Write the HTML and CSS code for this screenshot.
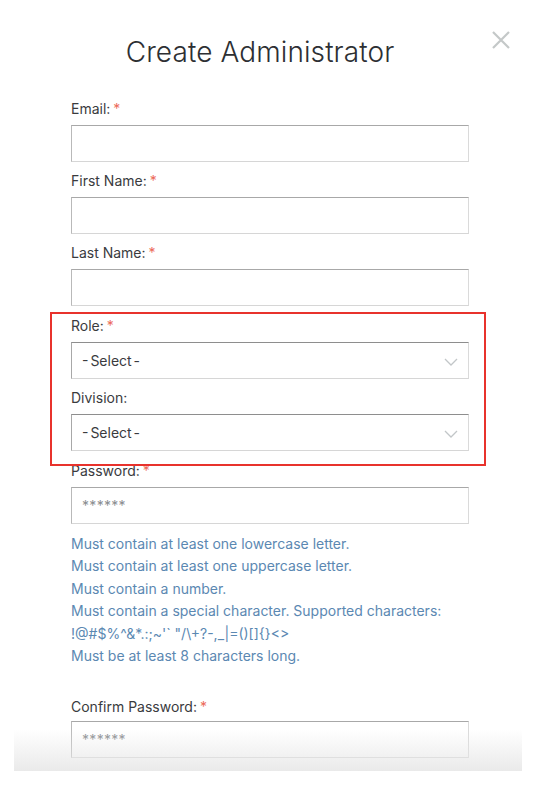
FILE: index.html
```html
<!DOCTYPE html>
<html>
<head>
<meta charset="utf-8">
<link rel="stylesheet" href="styles.css">
</head>
<body>
<div class="modal">
  <header class="modal-head">
    <h1 class="title">Create Administrator</h1>
    <button class="close" aria-label="Close">
      <svg width="18" height="18" viewBox="0 0 18 18"><path d="M1 1L17 17M17 1L1 17" stroke="#c4c8c8" stroke-width="2.2" fill="none"/></svg>
    </button>
  </header>
  <form class="form">
    <div class="field">
      <label class="label">Email:<span class="req">*</span></label>
      <input class="input" type="text">
    </div>
    <div class="field">
      <label class="label">First Name:<span class="req">*</span></label>
      <input class="input" type="text">
    </div>
    <div class="field">
      <label class="label">Last Name:<span class="req">*</span></label>
      <input class="input" type="text">
    </div>
    <div class="group">
      <div class="field">
        <label class="label">Role:<span class="req">*</span></label>
        <div class="select"><span class="sel-text">- Select -</span>
          <svg class="chev" width="14" height="8" viewBox="0 0 14 8"><path d="M1 1L7 7L13 1" stroke="#c2c6c8" stroke-width="1.3" fill="none"/></svg>
        </div>
      </div>
      <div class="field">
        <label class="label">Division:</label>
        <div class="select"><span class="sel-text">- Select -</span>
          <svg class="chev" width="14" height="8" viewBox="0 0 14 8"><path d="M1 1L7 7L13 1" stroke="#c2c6c8" stroke-width="1.3" fill="none"/></svg>
        </div>
      </div>
    </div>
    <div class="field pwfield">
      <label class="label">Password:<span class="req">*</span></label>
      <div class="input pw">******</div>
      <ul class="rules">
        <li>Must contain at least one lowercase letter.</li>
        <li>Must contain at least one uppercase letter.</li>
        <li>Must contain a number.</li>
        <li>Must contain a special character. Supported characters: !@#$%^&amp;*.:;~'` "/\+?-,_|=()[]{}&lt;&gt;</li>
        <li>Must be at least 8 characters long.</li>
      </ul>
    </div>
    <div class="field confirm">
      <label class="label">Confirm Password:<span class="req">*</span></label>
      <div class="input pw">******</div>
    </div>
  </form>
  <div class="fade"></div>
</div>
</body>
</html>
```
FILE: styles.css
```css
html, body {
  margin: 0;
  padding: 0;
  background: #fff;
  height: 786px;
  overflow: hidden;
}
body {
  font-family: Inter, "Noto Sans", sans-serif;
  color: #333;
}
.modal {
  position: relative;
  width: 508px;
  margin-left: 14px;
  height: 771px;
  overflow: hidden;
  background: #fff;
}
.modal-head {
  position: relative;
  padding-top: 34px;
  padding-right: 16px;
  height: 72px;
  box-sizing: border-box;
}
.title {
  margin: 0;
  text-align: center;
  font-weight: 300;
  font-size: 28px;
  line-height: 36px;
  color: #2d2f33;
  letter-spacing: 0.1px;
}
.close {
  position: absolute;
  top: 31px;
  right: 12px;
  padding: 0;
  border: 0;
  background: none;
  width: 18px;
  height: 18px;
}
.close svg { display: block; }
.form {
  margin-left: 57px;
  width: 398px;
  display: flex;
  flex-direction: column;
  gap: 10px;
  padding-top: 28px;
}
.group {
  position: relative;
  display: flex;
  flex-direction: column;
  gap: 10px;
  margin-top: 1px;
}
.group::before {
  content: "";
  position: absolute;
  left: -21px;
  right: -17px;
  top: -5px;
  bottom: -15px;
  border: 2px solid #e8322c;
  pointer-events: none;
}
.pwfield { margin-top: 1px; }
.field {
  display: flex;
  flex-direction: column;
}
.label {
  font-size: 14px;
  line-height: 18px;
  margin-bottom: 7px;
  color: #3a3b3e;
}
.confirm .label { margin-bottom: 5px; }
.req { color: #ec6a5a; margin-left: 3px; }
.input {
  box-sizing: border-box;
  height: 37px;
  width: 398px;
  margin: 0;
  border-style: solid;
  border-width: 1px;
  border-color: #a8a8a8 #dadada #d6d6d6 #b9b9b9;
  background: #fff;
  font: inherit;
}
.pw {
  display: flex;
  align-items: center;
  padding-left: 10px;
  font-size: 14px;
  color: #8a8d90;
  letter-spacing: 0.3px;
}
.select {
  box-sizing: border-box;
  height: 37px;
  display: flex;
  align-items: center;
  justify-content: space-between;
  padding: 0 10px;
  border-style: solid;
  border-width: 1px;
  border-color: #8e8e8e #dadada #d6d6d6 #a8a8a8;
  font-size: 14px;
  color: #3a3b3e;
}
.sel-text { word-spacing: -2px; }
.chev { display: block; margin-top: 3px; }
.rules {
  list-style: none;
  margin: 9px 0 0 0;
  padding: 0;
  font-size: 14px;
  line-height: 22.4px;
  color: #5b88b2;
  width: 380px;
}
.confirm { margin-top: 21px; }
.fade {
  position: absolute;
  left: 0;
  right: 0;
  bottom: 0;
  height: 42px;
  background: linear-gradient(to bottom, rgba(255,255,255,0), rgba(230,230,230,0.85));
  pointer-events: none;
}
```
